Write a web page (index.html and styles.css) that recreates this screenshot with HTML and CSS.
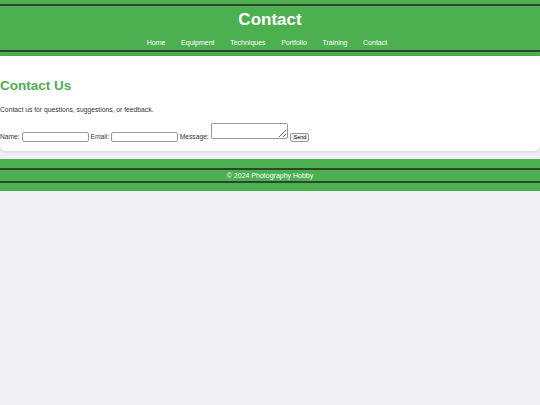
FILE: index.html
```html
<!DOCTYPE html>
<html lang="en">
<head>
<meta charset="utf-8">
<title>Contact</title>
<link rel="stylesheet" href="styles.css">
</head>
<body>
<header class="site-header">
  <div class="header-bar">
    <h1 class="site-title">Contact</h1>
    <nav class="main-nav">
      <a href="#">Home</a>
      <a href="#">Equipment</a>
      <a href="#">Techniques</a>
      <a href="#">Portfolio</a>
      <a href="#">Training</a>
      <a href="#">Contact</a>
    </nav>
  </div>
</header>
<main class="content">
  <h2 class="section-title">Contact Us</h2>
  <p class="intro">Contact us for questions, suggestions, or feedback.</p>
  <form class="contact-form">
    <label class="field-label">Name:</label>
    <input class="field-input" type="text">
    <label class="field-label">Email:</label>
    <input class="field-input" type="email">
    <label class="field-label">Message:</label>
    <textarea class="field-area"></textarea>
    <button class="send-btn" type="button">Send</button>
  </form>
</main>
<footer class="site-footer">
  <p class="footer-bar">© 2024 Photography Hobby</p>
</footer>
</body>
</html>
```
FILE: styles.css
```css
* { box-sizing: border-box; }
html, body {
  margin: 0;
  padding: 0;
  background: #f0f0f5;
  font-family: "Liberation Sans", Arial, sans-serif;
  color: #333;
}
.site-header {
  background: #4caf50;
  padding: 4px 0;
}
.header-bar {
  border-top: 2px solid #2c472d;
  border-bottom: 2px solid #2c472d;
  padding: 4px 0 3px;
  text-align: center;
}
.site-title {
  margin: 0;
  font-size: 17px;
  line-height: 20px;
  font-weight: bold;
  color: #fff;
}
.main-nav {
  margin-top: 8px;
  padding-right: 6px;
  font-size: 7px;
  line-height: 9px;
  display: flex;
  justify-content: center;
  gap: 15.6px;
}
.main-nav a {
  color: #fff;
  text-decoration: none;
}
.content {
  background: #fff;
  padding: 22px 0 9px;
  border-radius: 0 0 6px 6px;
  box-shadow: 0 1px 4px rgba(0,0,0,0.12);
}
.section-title {
  margin: 0;
  font-size: 13.5px;
  line-height: 16px;
  color: #4caf50;
  font-weight: bold;
}
.intro {
  margin: 11px 0 0;
  font-size: 6.75px;
  line-height: 9px;
}
.contact-form {
  margin-top: 9px;
  font-size: 6.7px;
  line-height: 9px;
}
.field-input {
  width: 67px;
  height: 10px;
  padding: 0;
  border: 1px solid #999;
  border-radius: 2px;
  font-size: 7px;
  margin: 0;
}
.field-area {
  width: 77px;
  height: 16px;
  padding: 0;
  border: 1px solid #999;
  border-radius: 2px;
  font-size: 7px;
  margin: 0;
  vertical-align: baseline;
}
.send-btn {
  width: 19px;
  height: 9px;
  padding: 0;
  margin: 0 0 0 1px;
  font-size: 5.5px;
  font-family: "Liberation Sans", Arial, sans-serif;
  border: 1px solid #999;
  border-radius: 2px;
  background: #efefef;
  color: #000;
  line-height: 7px;
}
.site-footer {
  margin-top: 8px;
  background: #4caf50;
  padding: 9px 0 8px;
}
.footer-bar {
  margin: 0;
  border-top: 2px solid #2c472d;
  border-bottom: 2px solid #2c472d;
  font-size: 7px;
  line-height: 11px;
  text-align: center;
  color: #fff;
}
```
